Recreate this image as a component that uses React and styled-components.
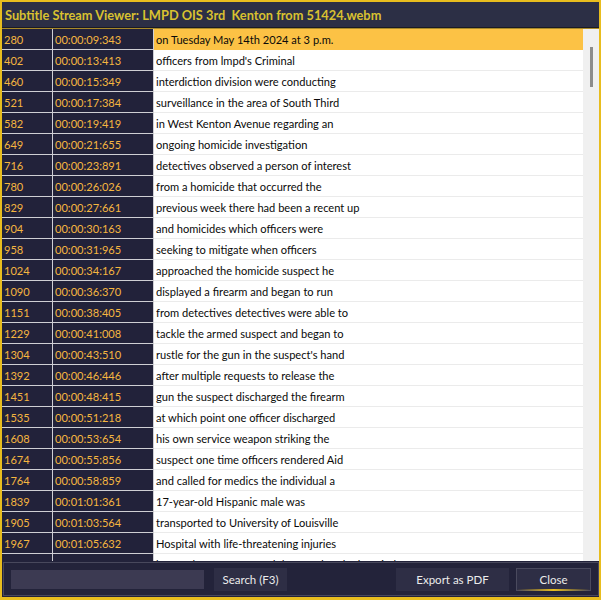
import React from 'react'
import styled, { createGlobalStyle } from 'styled-components'

const GlobalStyle = createGlobalStyle`
  html, body {
    margin: 0;
    padding: 0;
    background: #1a1a26;
  }
  * {
    box-sizing: border-box;
  }
`

const Window = styled.div`
  width: 601px;
  height: 600px;
  display: flex;
  flex-direction: column;
  border-left: 2px solid #e8bd1e;
  border-right: 2px solid #e8bd1e;
  border-top: 2px solid #e8bd1e;
  border-bottom: 3px solid #e8bd1e;
  background: #22223a;
  font-family: Lato, "Noto Sans", sans-serif;
  overflow: hidden;
`

const TitleBar = styled.div`
  height: 26px;
  flex-shrink: 0;
  display: flex;
  align-items: center;
  padding-left: 3px;
  background: #2c2f45;
  border-bottom: 1px solid #1b1b24;
  box-shadow: 0 1px 0 #a88a2a;
  margin-bottom: 1px;
  color: #d9c130;
  font-weight: bold;
  font-size: 12.8px;
  white-space: pre;
`

const Body = styled.div`
  flex: 1;
  min-height: 0;
  display: flex;
`

const Viewport = styled.div`
  flex: 1;
  overflow: hidden;
`

const Row = styled.div`
  display: flex;
  height: 21px;
  font-size: 11.1px;
`

const DarkCell = styled.div`
  width: ${p => p.$w}px;
  flex-shrink: 0;
  display: flex;
  align-items: center;
  padding-left: 2px;
  background: #22223a;
  color: #f5b640;
  border-right: 1px solid #cfcfd4;
  border-bottom: 1px solid #cfcfd4;
`

const TextCell = styled.div`
  flex: 1;
  display: flex;
  align-items: center;
  padding-left: 2px;
  white-space: nowrap;
  overflow: hidden;
  background: ${p => (p.$selected ? '#fcc245' : '#ffffff')};
  color: #0a0a0a;
  border-bottom: 1px solid ${p => (p.$selected ? '#fcc245' : '#ebebeb')};
`

const Scrollbar = styled.div`
  width: 16px;
  flex-shrink: 0;
  background: #f0f0f0;
  position: relative;
`

const Thumb = styled.div`
  position: absolute;
  left: 7px;
  top: 18px;
  width: 3px;
  height: 40px;
  background: #8c8c8c;
`

const Footer = styled.div`
  height: 36px;
  flex-shrink: 0;
  padding: 1px 0 1px 1px;
  background: #22223a;
`

const FooterPanel = styled.div`
  height: 100%;
  display: flex;
  align-items: center;
  padding: 0 7px;
  border: 1px solid #48485c;
  background: #23233a;
`

const SearchInput = styled.input`
  width: 193px;
  height: 19px;
  border: none;
  outline: none;
  background: #3c3a52;
  color: #e8e8e8;
  font-family: inherit;
  font-size: 12px;
`

const Button = styled.button`
  position: relative;
  width: ${p => p.$w}px;
  height: 23px;
  margin-left: ${p => p.$gap}px;
  background: #2e2e45;
  border: 1px solid ${p => (p.$focused ? '#4a4a5e' : '#2e2e45')};
  color: #ececec;
  font-family: inherit;
  font-size: 11.5px;
  padding: 0;

  &::after {
    content: "";
    display: ${p => (p.$focused ? 'block' : 'none')};
    position: absolute;
    left: 0;
    right: 0;
    bottom: -1px;
    height: 2px;
    background: linear-gradient(90deg, rgba(232, 189, 30, 0), #e8bd1e 50%, rgba(232, 189, 30, 0));
  }
`

const Spacer = styled.div`
  flex: 1;
`

const lines = [
  ['280', '00:00:09:343', 'on Tuesday May 14th 2024 at 3 p.m.'],
  ['402', '00:00:13:413', "officers from lmpd's Criminal"],
  ['460', '00:00:15:349', 'interdiction division were conducting'],
  ['521', '00:00:17:384', 'surveillance in the area of South Third'],
  ['582', '00:00:19:419', 'in West Kenton Avenue regarding an'],
  ['649', '00:00:21:655', 'ongoing homicide investigation'],
  ['716', '00:00:23:891', 'detectives observed a person of interest'],
  ['780', '00:00:26:026', 'from a homicide that occurred the'],
  ['829', '00:00:27:661', 'previous week there had been a recent up'],
  ['904', '00:00:30:163', 'and homicides which officers were'],
  ['958', '00:00:31:965', 'seeking to mitigate when officers'],
  ['1024', '00:00:34:167', 'approached the homicide suspect he'],
  ['1090', '00:00:36:370', 'displayed a firearm and began to run'],
  ['1151', '00:00:38:405', 'from detectives detectives were able to'],
  ['1229', '00:00:41:008', 'tackle the armed suspect and began to'],
  ['1304', '00:00:43:510', "rustle for the gun in the suspect's hand"],
  ['1392', '00:00:46:446', 'after multiple requests to release the'],
  ['1451', '00:00:48:415', 'gun the suspect discharged the firearm'],
  ['1535', '00:00:51:218', 'at which point one officer discharged'],
  ['1608', '00:00:53:654', 'his own service weapon striking the'],
  ['1674', '00:00:55:856', 'suspect one time officers rendered Aid'],
  ['1764', '00:00:58:859', 'and called for medics the individual a'],
  ['1839', '00:01:01:361', '17-year-old Hispanic male was'],
  ['1905', '00:01:03:564', 'transported to University of Louisville'],
  ['1967', '00:01:05:632', 'Hospital with life-threatening injuries'],
  ['2031', '00:01:07:701', 'he was later pronounced deceased at the hospital'],
]

const App = () => {
  return (
    <>
      <GlobalStyle />
      <Window>
        <TitleBar>Subtitle Stream Viewer: LMPD OIS 3rd  Kenton from 51424.webm</TitleBar>
        <Body>
          <Viewport>
            {lines.map(([id, time, text], i) => (
              <Row key={id}>
                <DarkCell $w={51}>{id}</DarkCell>
                <DarkCell $w={101}>{time}</DarkCell>
                <TextCell $selected={i === 0}>{text}</TextCell>
              </Row>
            ))}
          </Viewport>
          <Scrollbar>
            <Thumb />
          </Scrollbar>
        </Body>
        <Footer>
          <FooterPanel>
            <SearchInput />
            <Button $w={73} $gap={10}>Search (F3)</Button>
            <Spacer />
            <Button $w={113} $gap={0}>Export as PDF</Button>
            <Button $w={75} $gap={7} $focused>Close</Button>
          </FooterPanel>
        </Footer>
      </Window>
    </>
  )
}

export default App
